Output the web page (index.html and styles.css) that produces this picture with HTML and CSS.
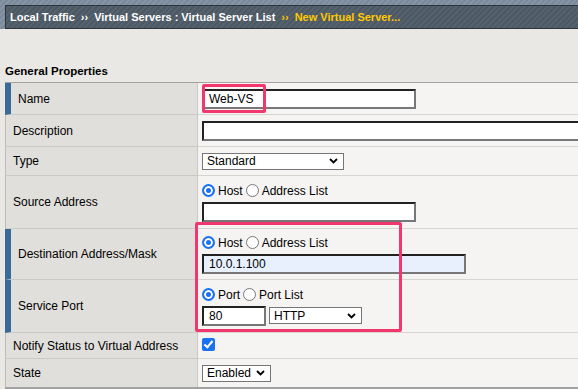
FILE: index.html
```html
<!DOCTYPE html>
<html lang="en">
<head>
    <meta charset="UTF-8">
    <meta name="viewport" content="width=device-width, initial-scale=1.0">
    <title>New Virtual Server</title>
    <link rel="stylesheet" href="styles.css">
</head>
<body>
    <header class="topbar">
        <nav class="crumbs">
            <span>Local Traffic</span>
            <span class="sep">&rsaquo;&rsaquo;</span>
            <span>Virtual Servers : Virtual Server List</span>
            <span class="sep current">&rsaquo;&rsaquo;</span>
            <span class="current">New Virtual Server...</span>
        </nav>
    </header>

    <h2 class="section-title">General Properties</h2>

    <div class="props-wrap">
        <table class="props">
            <tr class="row-name">
                <td class="label required">Name</td>
                <td class="value">
                    <div class="field">
                        <input class="text w-214" type="text" value="Web-VS">
                        <div class="mark mark-name"></div>
                    </div>
                </td>
            </tr>
            <tr class="row-desc">
                <td class="label">Description</td>
                <td class="value"><input class="text w-wide" type="text"></td>
            </tr>
            <tr class="row-type">
                <td class="label">Type</td>
                <td class="value">
                    <div class="select w-142"><span>Standard</span>
                        <svg width="9" height="6" viewBox="0 0 9 6"><polyline points="1,1 4.5,4.5 8,1" fill="none" stroke="#000" stroke-width="1.8"/></svg>
                    </div>
                </td>
            </tr>
            <tr class="row-source">
                <td class="label">Source Address</td>
                <td class="value">
                    <div class="choice">
                        <input type="radio" name="src" checked><span>Host</span>
                        <input type="radio" name="src"><span>Address List</span>
                    </div>
                    <input class="text w-214" type="text">
                </td>
            </tr>
            <tr class="row-dest">
                <td class="label required">Destination Address/Mask</td>
                <td class="value">
                    <div class="choice">
                        <input type="radio" name="dst" checked><span>Host</span>
                        <input type="radio" name="dst"><span>Address List</span>
                    </div>
                    <input class="text w-264 filled" type="text" value="10.0.1.100">
                </td>
            </tr>
            <tr class="row-port">
                <td class="label required">Service Port</td>
                <td class="value">
                    <div class="choice">
                        <input type="radio" name="port" checked><span>Port</span>
                        <input type="radio" name="port"><span>Port List</span>
                    </div>
                    <div class="port-line">
                        <input class="text w-64" type="text" value="80">
                        <div class="select w-93"><span>HTTP</span>
                            <svg width="9" height="6" viewBox="0 0 9 6"><polyline points="1,1 4.5,4.5 8,1" fill="none" stroke="#000" stroke-width="1.8"/></svg>
                        </div>
                    </div>
                </td>
            </tr>
            <tr class="row-notify">
                <td class="label">Notify Status to Virtual Address</td>
                <td class="value"><input class="check" type="checkbox" checked></td>
            </tr>
            <tr class="row-state">
                <td class="label">State</td>
                <td class="value">
                    <div class="select w-69"><span>Enabled</span>
                        <svg width="9" height="6" viewBox="0 0 9 6"><polyline points="1,1 4.5,4.5 8,1" fill="none" stroke="#000" stroke-width="1.8"/></svg>
                    </div>
                </td>
            </tr>
        </table>
        <div class="mark mark-dest"></div>
    </div>
</body>
</html>
```

FILE: styles.css
```css
* { box-sizing: border-box; }
body { margin: 0; background: #e9e8e4; font-family: "Liberation Sans", Arial, sans-serif; font-size: 12px; color: #000; overflow: hidden; }

/* top breadcrumb bar */
.topbar { padding: 5px 0 0 5px; background: repeating-linear-gradient(135deg, #7b8a9b 0 2px, #8695a6 2px 4px); }
.crumbs { display: flex; align-items: center; height: 24px; padding-left: 4px; border: 1px solid #2e3439; border-right: none; background: repeating-linear-gradient(135deg, #4c5864 0 2px, #55616d 2px 4px); color: #fff; font-size: 11px; font-weight: bold; white-space: nowrap; overflow: hidden; }
.crumbs .sep { margin: 0 6px 0 6px; }
.crumbs .current { color: #ffc800; }

.section-title { margin: 35px 0 4px 5px; font-size: 11.5px; line-height: 14px; font-weight: bold; }

/* properties table (wider than the window, cut at the right edge) */
.props-wrap { position: relative; margin-left: 5px; overflow: hidden; }
.props { width: 100%; table-layout: fixed; border-collapse: separate; border-spacing: 0; border-top: 1px solid #a2a2a2; border-bottom: 2px solid #a2a2a2; }
.props td { border-bottom: 1px solid #d6d5d1; vertical-align: middle; }
.props tr:last-child td { border-bottom: none; }
.label { width: 193px; padding-left: 7px; background: #e0dfdb; border-left: 1px solid #bdbcb8; border-right: 1px solid #c9c8c4; border-bottom-color: #cbcac6 !important; }
.label.required { border-left: 6px solid #3a6a98; padding-left: 7px; }
.value { padding-left: 4px; background: #f5f4f2; }

.row-name td, .row-desc td { height: 32px; }
.row-type td { height: 29px; }
.row-source td, .row-port td { height: 53px; }
.row-dest td { height: 51px; }
.row-notify td { height: 26px; }
.row-state td { height: 28px; }

/* controls */
.text { display: block; height: 20px; padding: 0 5px; border: 2px solid; border-color: #222 #777 #777 #222; background: #fff; font: 12px "Liberation Sans", Arial, sans-serif; color: #000; outline: none; }
.text.filled { background: #e8f0fe; }
.w-214 { width: 214px; }
.w-wide { width: 420px; }
.w-264 { width: 264px; }
.w-64 { width: 64px; }

.select { display: flex; align-items: center; justify-content: space-between; height: 17px; padding: 0 5px 0 4px; border: 1px solid #767676; background: #fff; }
.w-142 { width: 142px; }
.w-93 { width: 93px; }
.w-69 { width: 69px; }

.choice { display: flex; align-items: center; height: 16px; margin-bottom: 3px; }
.choice input { appearance: none; width: 13px; height: 13px; margin: 0 3px 0 0; border: 1px solid #767676; border-radius: 50%; background: #fff; }
.choice input:checked { border: 2px solid #1a72f0; background: #1a72f0; box-shadow: inset 0 0 0 2px #fff; }
.choice span { margin-right: 3px; }

.port-line { display: flex; align-items: center; gap: 3px; }

.check { appearance: none; display: block; position: relative; width: 13px; height: 13px; margin: 0 0 3px 0; border-radius: 2px; background: #1a72f0; }
.check::after { content: ""; position: absolute; left: 4px; top: 1px; width: 3px; height: 7px; border: solid #fff; border-width: 0 2px 2px 0; transform: rotate(40deg); }

/* pink annotation boxes */
.field { position: relative; }
.mark { position: absolute; border: 3px solid #f2376f; border-radius: 2px; }
.mark-name { left: 0; top: -5px; width: 64px; height: 29px; }
.mark-dest { left: 190px; top: 140px; width: 207px; height: 110px; }
```
